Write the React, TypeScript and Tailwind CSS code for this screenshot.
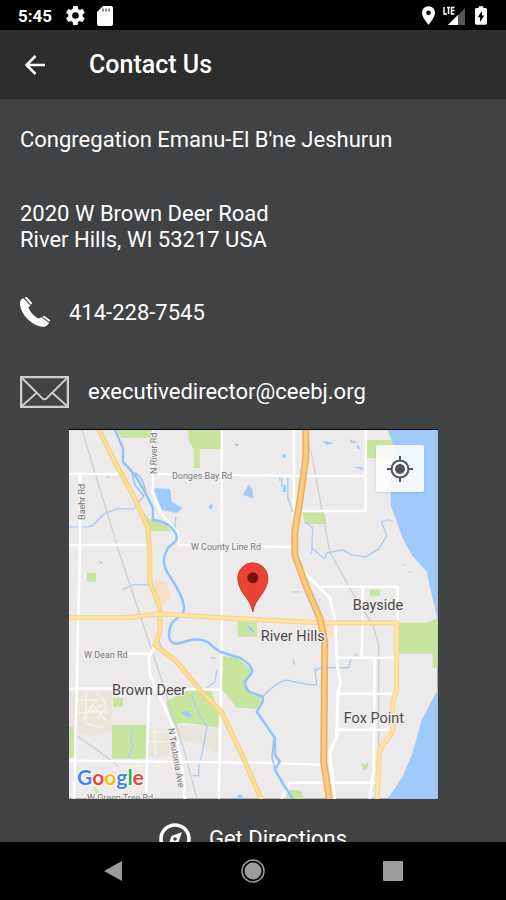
import type { ReactNode } from "react";

function StatusBar() {
  return (
    <div className="flex h-[30px] shrink-0 items-center justify-between bg-black px-[18px] pt-px text-white">
      <div className="flex items-center">
        <span className="w-[48px] text-[17px] font-bold leading-5">5:45</span>
        <svg className="h-[19px] w-[19px]" viewBox="2 2 20 20" fill="currentColor" aria-hidden="true">
          <path d="M19.4 13c.1-.3.1-.6.1-1s0-.7-.1-1l2.100-1.600c.2-.2.300-.4.100-.6l-2-3.500c-.1-.2-.4-.3-.6-.2l-2.500 1a7 7 0 0 0-1.700-1l-.4-2.600c0-.3-.2-.5-.5-.5h-4c-.2 0-.4.200-.5.500L9 5.100a7 7 0 0 0-1.700 1l-2.500-1c-.2-.1-.5 0-.6.200l-2 3.500c-.1.200-.1.500.1.600L4.500 11a8 8 0 0 0 0 2l-2.200 1.600c-.2.200-.2.400-.1.600l2 3.500c.1.200.4.300.6.200l2.500-1a7 7 0 0 0 1.700 1l.4 2.600c.1.300.3.500.5.500h4c.3 0 .5-.2.5-.5l.4-2.600a7 7 0 0 0 1.700-1l2.500 1c.2.100.5 0 .6-.2l2-3.500c.2-.2.1-.5-.1-.6zM12 15.500a3.500 3.500 0 1 1 0-7 3.500 3.500 0 0 1 0 7z" />
        </svg>
        <svg className="ml-3 h-[20px] w-[16px]" viewBox="0 0 16 20" aria-hidden="true">
          <path d="M6 0h8a2 2 0 0 1 2 2v16a2 2 0 0 1-2 2H2a2 2 0 0 1-2-2V6z" fill="white" />
          <path d="M6 2.500v3M9 2.500v3M12 2.500v3" stroke="#666" strokeWidth="1.500" />
        </svg>
      </div>
      <div className="flex items-center">
        <svg className="h-[19px] w-[13px]" viewBox="5 2 14 20" fill="currentColor" aria-hidden="true">
          <path d="M12 2a7 7 0 0 0-7 7c0 5.250 7 13 7 13s7-7.750 7-13a7 7 0 0 0-7-7zm0 9.500a2.500 2.500 0 1 1 0-5 2.500 2.500 0 0 1 0 5z" />
        </svg>
        <svg className="ml-2 h-[20px] w-[23px]" viewBox="0 0 23 20" aria-hidden="true">
          <path d="M22 2v17H5z" fill="#555" />
          <path d="M15 9v10H5z" fill="white" />
          <path d="M1 1v7h3M4 1.500h3M5.500 1.500V8M11.500 1.500H8.500V8h3M8.500 4.500h3" stroke="white" strokeWidth="1.500" fill="none" />
        </svg>
        <svg className="mr-px ml-[9px] h-[19px] w-[12px]" viewBox="0 0 13 20" aria-hidden="true">
          <path d="M4 0h5v2h2.500q1.500 0 1.500 1.500v15q0 1.500-1.500 1.500h-10Q0 20 0 18.500v-15Q0 2 1.500 2H4z" fill="white" />
          <path d="M7.500 5v5H10l-4.500 7v-5H3z" fill="black" />
        </svg>
      </div>
    </div>
  );
}

function Road({ d, color = "#fff", width = 2.5 }: { d: string; color?: string; width?: number }) {
  return <path d={d} fill="none" stroke={color} strokeWidth={width} strokeLinejoin="round" strokeLinecap="round" />;
}

function Halo({ children }: { children: ReactNode }) {
  return (
    <g stroke="#f2f1f0" strokeWidth="2" strokeLinejoin="round" style={{ paintOrder: "stroke" }}>
      {children}
    </g>
  );
}

function MapDrawing() {
  return (
    <svg className="block h-auto w-full" viewBox="0 0 369 369" role="img" aria-label="Map of River Hills">
      <rect width="369" height="369" fill="#eceaeb" />

      {/* Built-up areas */}
      <path d="M0 262H43V300L24 306 0 302zM104 295L149 298V324L135 315 112 310zM79 299H100V327H79z" fill="#e9e5da" />
      <path d="M86 150L97 152 102 168 95 175 88 168zM255 195H265V207H257z" fill="#f6dfc4" />
      <g fill="none" stroke="#f6f3df" strokeWidth="1.500">
        <path d="M8 270H28L18 282H40M14 290L24 275 38 292M17 262V294L34 298M28 264C38 270 40 280 28 288M8 283H20L34 275" />
        <path d="M82 302H100M86 300V326M80 312H97M55 336H112M68 330V341M90 330V340" />
      </g>

      {/* Parks */}
      <g fill="#c8e5a0">
        <path d="M48 0H83V8H52z" />
        <path d="M119 0H153V19H131V38H125V19L120 12z" />
        <path d="M73 81L80 89 94 92 103 101 78 101z" />
        <path d="M298 10H326V28H298z" />
        <path d="M234 82H255L258 94H236z" />
        <path d="M18 143H27V152H18zM169 191H188V207H169z" />
        <path d="M153 226L168 228 183 240 176 252 183 265 194 268 188 279 168 278 153 260z" />
        <path d="M301 160H311V166H301z" />
        <path d="M329 193H358L369 188V238H364V224H329z" />
        <path d="M44 268H54V277H44zM43 295H77V329H43zM0 297H5V328H0z" />
        <path d="M97 272L118 260H142L150 282V298L131 295 114 293 104 295z" />
        <path d="M24 356L31 362 27 364zM217 369L220 360 232 361 236 369z" />
        <path d="M292 333L296 335 300 332 299 338 295 341z" />
      </g>

      {/* Lake and ponds */}
      <g fill="#9fcbfb">
        <path d="M319 0L326 18 322 42 322 75 334 108 343 125 358 142 363 165 369 190V0z" />
        <path d="M369 260L353 290 344 323 334 347 319 369H369z" />
        <path d="M84 58L101 59 103 72 114 78 108 83 93 80z" />
        <path d="M174 65L180 54 184 60 184 68zM139 77L144 73 143 80zM166 13L171 15 167 16zM181 57L185 68H181z" />
        <path d="M254 11L266 13 258 15zM280 9L290 13 283 13zM289 14L292 20 288 18zM285 37L294 37 294 40zM111 283L119 281 124 288 118 287z" />
        <path d="M38 46L41 48 38 48zM30 131L34 133 31 134zM178 194L187 203 181 201zM169 365H174V369H169zM214 24H217V28H214zM214 55H217V62H214z" />
      </g>

      {/* Streams */}
      <g fill="none" stroke="#a9cdf3" strokeWidth="1.300" strokeLinejoin="round">
        <path d="M0 97H20C29 95 30 84 40 82L48 79H64C70 77 68 70 75 67M53 160L64 155H81M107 87L106 100" />
        <path d="M211 46V51M219 48V68L224 82M213 48V57M236 92L244 98 243 118 256 129 258 123 274 120 283 125 297 127 310 119 318 106 313 92 320 90 325 92" />
        <path d="M244 118L242 124M194 267C204 256 216 247 224 252L242 255 248 255 246 238M246 242L251 238H280L282 230 289 224" />
        <path d="M125 262L124 270 131 285 138 297 134 320 130 336 130 346H124M64 300L62 307 64 318 59 328M148 240L146 252 137 259" />
        <path d="M224 162H230M251 169V171M334 135H336M340 142H342M90 210L92 217M142 228H147M224 230L226 235" />
      </g>

      {/* Railways */}
      <g fill="none" stroke="#cfcece" strokeWidth="1.200">
        <path d="M13 0L51 125 71 185 91 245 115 320 128 369M2 302L28 320 50 337" />
        <path d="M238 10L243 25 261 122 281 158 304 195 310 215 310 317" />
      </g>

      {/* Local roads */}
      <Road d="M0 44H49M90 44L225 46H296M153 0V202L150 369M225 0V78M297 0V81H233" />
      <Road d="M0 115H78M110 115L223 117M84 0V62L91 82 108 102 110 115" />
      <Road d="M11 44V115L8 245 5 369M0 259H80L151 260" />
      <Road d="M59 224H80M86 216L80 228 81 245 91 267 104 297 113 333 116 369" width={3} />
      <Road d="M80 262L77 369M0 331L191 333 255 335M308 353H221L213 369" />
      <Road d="M236 143L261 168 266 188 269 240 272 253 269 263 268 307 261 323 266 369" width={3} />
      <Road d="M253 157H329V193M294 157L293 228M270 228H328M306 228L305 340 301 369M271 264H324M268 300H324" />

      {/* River */}
      <Road
        color="#91c3fa"
        width={2.5}
        d="M46 0L54 18 54 32 66 45 76 62 84 78 84 90Q96 91 103 98 110 106 107 111L99 118 96 125C92 138 101 145 108 158Q118 176 114 183L103 193C99 202 98 214 108 214L123 210Q137 208 143 216L151 222 171 228Q185 236 183 243L176 252Q177 262 183 263L194 267V272L188 282 206 308V325L211 332 206 340 216 357 224 369"
      />
      <Road color="#91c3fa" width={1.5} d="M63 43L66 55 75 66M66 43Q75 47 77 65M205 310L203 328 207 341" />

      {/* Arterials and freeway */}
      <Road color="#f3cf7e" width={5} d="M29 -2L46 32 64 65 79 98 81 125V152L91 178V202L86 215 108 232 131 260 153 283 174 327 193 371" />
      <Road color="#ffdf93" width={3} d="M29 -2L46 32 64 65 79 98 81 125V152L91 178V202L86 215 108 232 131 260 153 283 174 327 193 371" />
      <Road color="#f5d58d" width={5} d="M-2 188H58L91 184 151 188 251 193H328V260L324 273V302L311 320 308 371" />
      <Road color="#fee5a4" width={3} d="M-2 188H58L91 184 151 188 251 193H328V260L324 273V302L311 320 308 371" />
      <Road color="#eaae62" width={7} d="M237 -3V28L231 72 226 102V125L238 158 251 188 256 212 255 333 261 372" />
      <Road color="#fccb82" width={4} d="M237 -3V28L231 72 226 102V125L238 158 251 188 256 212 255 333 261 372" />

      {/* Labels */}
      <g fontFamily="Roboto, sans-serif">
        <Halo>
          <g fontSize="9" fill="#777">
            <text x="103" y="49">Donges Bay Rd</text>
            <text x="122" y="120">W County Line Rd</text>
            <text x="15" y="228">W Dean Rd</text>
            <text x="18" y="371">W Green Tree Rd</text>
            <text transform="translate(88 44) rotate(-90)">N River Rd</text>
            <text transform="translate(16 90) rotate(-90)">Baehr Rd</text>
            <text transform="translate(99 299) rotate(80)">N Teutonia Ave</text>
          </g>
          <g fontSize="14.500" fill="#4b4944">
            <text x="284" y="180">Bayside</text>
            <text x="192" y="211">River Hills</text>
            <text x="43" y="265">Brown Deer</text>
            <text x="275" y="293">Fox Point</text>
          </g>
        </Halo>
        <text
          x="8"
          y="355"
          fontSize="21"
          fontFamily="Lato, sans-serif"
          fontWeight="700"
          stroke="#fff"
          strokeWidth="2"
          style={{ paintOrder: "stroke" }}
        >
          <tspan fill="#4285f4">G</tspan>
          <tspan fill="#ea4335">o</tspan>
          <tspan fill="#fbbc05">o</tspan>
          <tspan fill="#4285f4">g</tspan>
          <tspan fill="#34a853">l</tspan>
          <tspan fill="#ea4335">e</tspan>
        </text>
      </g>

      {/* Destination pin */}
      <path d="M184 182C182 168 169 163 169 148A15 15 0 0 1 199 148C199 163 186 168 184 182z" fill="#ea4335" stroke="#c5372c" strokeWidth="1" />
      <circle cx="184" cy="148" r="5.500" fill="#7a120c" />
    </svg>
  );
}

function MapPanel() {
  return (
    <div className="relative mx-auto w-[73%] border-t border-black">
      <MapDrawing />
      <button
        type="button"
        aria-label="My location"
        className="absolute right-[14px] top-[15px] flex h-[47px] w-[48px] items-center justify-center rounded-xs bg-white/85 shadow"
      >
        <svg className="h-[26px] w-[26px]" viewBox="0 0 26 26" fill="none" stroke="#555" strokeWidth="2" aria-hidden="true">
          <circle cx="13" cy="13" r="8.500" />
          <circle cx="13" cy="13" r="5" fill="#555" stroke="none" />
          <path d="M13 0v4M13 22v4M0 13h4M22 13h4" />
        </svg>
      </button>
    </div>
  );
}

function NavigationBar() {
  return (
    <nav aria-label="System" className="flex h-[58px] shrink-0 items-center justify-between bg-black px-[103px] text-[#9c9c9c]">
      <button type="button" aria-label="Back">
        <svg className="h-[22px] w-[20px]" viewBox="0 0 20 22" aria-hidden="true">
          <path d="M19 1v20L1 11z" fill="currentColor" />
        </svg>
      </button>
      <button type="button" aria-label="Home">
        <svg className="h-[24px] w-[24px]" viewBox="0 0 24 24" aria-hidden="true">
          <circle cx="12" cy="12" r="11" fill="none" stroke="currentColor" strokeWidth="1.500" />
          <circle cx="12" cy="12" r="8.500" fill="currentColor" />
        </svg>
      </button>
      <button type="button" aria-label="Recent apps">
        <svg className="h-[20px] w-[20px]" viewBox="0 0 20 20" aria-hidden="true">
          <rect width="20" height="20" rx="1" fill="currentColor" />
        </svg>
      </button>
    </nav>
  );
}

export default function App() {
  return (
    <div className="flex h-screen flex-col bg-[#414244] font-[Roboto,sans-serif] text-white">
      <StatusBar />
      <header className="relative flex h-[69px] shrink-0 items-center bg-[#2d2d2d] pl-[25px] shadow-sm">
        <button type="button" aria-label="Go back" className="w-[64px]">
          <svg className="h-[20px] w-[20px]" viewBox="0 0 20 20" fill="none" stroke="currentColor" strokeWidth="2.500" aria-hidden="true">
            <path d="M20 10H2M10.500 1L1.500 10l9 9" />
          </svg>
        </button>
        <h1 className="pt-px text-[25px] font-medium leading-7">Contact Us</h1>
      </header>

      <main className="min-h-0 flex-1 overflow-hidden text-[22px] leading-[26px]">
        <div className="px-5 pt-7">
          <p>Congregation Emanu-El B'ne Jeshurun</p>
          <address className="mt-12 not-italic">
            2020 W Brown Deer Road
            <br />
            River Hills, WI 53217 USA
          </address>
          <a href="tel:414-228-7545" className="mt-11 flex items-center gap-[19px]">
            <svg className="h-[31px] w-[30px]" viewBox="0 0 31 32" fill="currentColor" aria-hidden="true">
              <path d="M0 8C-.5 4 1.500 1.500 3.500 1.200L10.800 9 8.800 10.700C9.500 14.500 14.500 20.500 19.500 22.300L22 20.800 30 26.500C28.500 30 25.500 31 22.500 30.800C12 29 1.500 19 0 8z" />
              <path d="M4.700.6L6.400.1Q7 0 7.500.5L12.300 6Q12.600 6.500 12.200 7L11.300 8z" />
              <path d="M23 20.500L24.500 19.700Q25 19.500 25.500 19.800L30.700 23.500Q31.200 24 30.900 24.500L30.400 25.500z" />
            </svg>
            414-228-7545
          </a>
          <a href="mailto:executivedirector@ceebj.org" className="mt-12 flex items-center gap-[19px]">
            <svg className="h-[32px] w-[49px]" viewBox="0 0 49 32" fill="none" stroke="#cfcfcf" aria-hidden="true">
              <rect x="1" y="1" width="47" height="30" strokeWidth="2.500" />
              <path d="M2 2L22.500 22.500Q24.500 24 26.500 22.500L47 2M2 30L17 16.500M47 30L32 16.500" strokeWidth="1.800" />
            </svg>
            executivedirector@ceebj.org
          </a>
        </div>
        <div className="mt-[21px] pl-px">
          <MapPanel />
        </div>
        <button type="button" className="mx-auto mt-6 flex items-center gap-[18px]">
          <svg className="h-[32px] w-[32px]" viewBox="0 0 32 32" fill="none" aria-hidden="true">
            <circle cx="16" cy="16" r="14" stroke="white" strokeWidth="3.500" />
            <path d="M23 9l-3.500 10L9 23l3.500-10z" fill="white" />
            <circle cx="16" cy="16" r="1.800" fill="#414244" />
          </svg>
          Get Directions
        </button>
      </main>
      <NavigationBar />
    </div>
  );
}
